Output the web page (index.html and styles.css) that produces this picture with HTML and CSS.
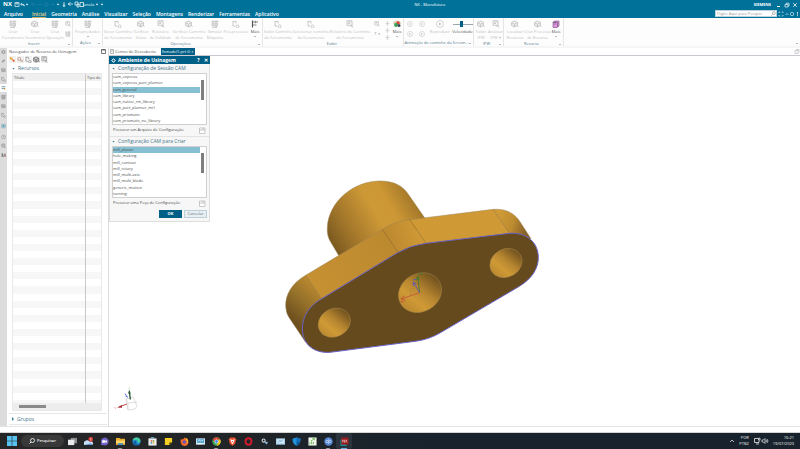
FILE: index.html
```html
<!DOCTYPE html>
<html lang="pt-BR">
<head>
<meta charset="utf-8">
<title>NX - Manufatura</title>
<link rel="stylesheet" href="styles.css">
</head>
<body>
<svg class="sprite" aria-hidden="true">
  <symbol id="i-tool" viewBox="0 0 8 8"><path d="M1 1h2v5H1zM4 1h3v1H4zM4 3h2v4H4zM6.500 3v3M1 7.500h5" fill="currentColor" fill-opacity=".5" stroke="currentColor" stroke-width=".7"/></symbol>
  <symbol id="i-cube" viewBox="0 0 8 8"><path d="M3.500 1l3 1.500v3l-3 1.500-3-1.500v-3zM.5 2.500l3 1.500 3-1.500M3.500 4v3M6 5l1.500 2" fill="currentColor" fill-opacity=".35" stroke="currentColor" stroke-width=".8"/></symbol>
  <symbol id="i-path" viewBox="0 0 8 8"><path d="M1 1v5h2M1 1.500h3v2M4 6.500a1.500 1.500 0 1 0 3 0 1.500 1.500 0 1 0-3 0" fill="none" stroke="currentColor" stroke-width=".9"/></symbol>
  <symbol id="i-report" viewBox="0 0 8 8"><path d="M1 .8h5v4.500H1zM2 2h3M2 3.500h2M5 5l2 2.500M6.500 5L4.500 7" fill="none" stroke="currentColor" stroke-width=".9"/></symbol>
  <symbol id="i-play" viewBox="0 0 8 8"><circle cx="4" cy="4" r="3.400" fill="none" stroke="currentColor" stroke-width=".7"/><path d="M3 2.500L5.500 4 3 5.500z" fill="currentColor"/></symbol>
  <symbol id="i-more" viewBox="0 0 8 8"><path d="M1.500.5v7" stroke="#555" stroke-width="1.200"/><path d="M2 2h5M2 5h3.500M4.500.8v2.400" stroke="#888" stroke-width="1.200"/></symbol>
  <symbol id="i-color" viewBox="0 0 8 8"><path d="M0 4a4 3.500 0 0 1 8 0z" fill="#d8d4b8"/><circle cx="5" cy="3" r="1.700" fill="#e03d2f"/><circle cx="3" cy="5" r="1.900" fill="#38a055"/><circle cx="6" cy="5.500" r="1.500" fill="#354858"/></symbol>
  <symbol id="i-lib" viewBox="0 0 8 8"><path d="M1 2l2-1h4v5L5 7.500H1z" fill="#df93e0" stroke="#84628a" stroke-width=".7"/><path d="M1 2.500h4.500V7M3 1v4" stroke="#66536f" stroke-width=".6" fill="none"/></symbol>
  <symbol id="i-move" viewBox="0 0 6 6"><path d="M3 .5v5M.5 3h5M2 1.500l1-1 1 1M2 4.500l1 1 1-1" fill="none" stroke="currentColor" stroke-width=".7"/></symbol>
  <symbol id="i-gear" viewBox="0 0 8 8"><circle cx="4" cy="4" r="2.200" fill="none" stroke="currentColor" stroke-width="1.400"/><path d="M4 .5v1M4 6.500v1M.5 4h1M6.500 4h1M1.500 1.500l.8.8M5.700 5.700l.8.8M6.500 1.500l-.8.8M2.300 5.700l-.8.8" stroke="currentColor"/></symbol>
  <symbol id="i-folder" viewBox="0 0 7 7"><path d="M.5 1h5.500v5.500H.5zM.5 3h3.500M4 1v2h2" fill="#fff" stroke="#b4b4b4" stroke-width=".7"/></symbol>
</svg>

<header class="head">
  <div class="titlebar">
    <strong class="brand">NX</strong>
    <svg class="quick" viewBox="0 0 92 9" aria-hidden="true"><path d="M1 2.500h4v4H1zM2 2.500v1.500h2V2.500" fill="none" stroke="#d9e8ef" stroke-width=".8"/><path d="M8 3L6.500 4.200l1.500 1.200M7 4.200H9q1.500 0 1.500 2M12 4h2l-1 1.200zM43 4h2l-1 1.200zM82 4h2l-1 1.200zM87 4h2l-1 1.200z" fill="#d9e8ef" stroke="#d9e8ef" stroke-width=".5"/><path d="M18 3.500h2v2h-2zM23 4.500h5M31 3h3v3h-3zM37 4.500h3" fill="none" stroke="#2580a3" stroke-width=".7"/><path d="M50 2v3M49 5h2l-1 2zM54 4h5M56.500 2.500L54 4l2.500 1.500" fill="none" stroke="#d9e8ef" stroke-width=".8"/><path d="M61 2h3v3h-3zM63 4h2v3h-2zM66 2.500h3.500v4H66z" fill="none" stroke="#e8f2f6" stroke-width=".8"/></svg>
    <span class="quick-text">Janela</span>
    <span class="wintitle">NX - Manufatura</span>
    <span class="vendor">SIEMENS</span>
    <button class="win" aria-label="Minimizar"><svg viewBox="0 0 6 6"><path d="M1 4.500h3" stroke="#fff"/></svg></button>
    <button class="win" aria-label="Restaurar"><svg viewBox="0 0 6 6"><path d="M1 2.500h3v2.500H1zM2.200 2.500V1.200H5V4H4" fill="none" stroke="#d9e8ef" stroke-width=".8"/></svg></button>
    <button class="win" aria-label="Fechar"><svg viewBox="0 0 6 6"><path d="M1.200 1.200l3.600 3.600M4.800 1.200L1.200 4.800" stroke="#d9e8ef" stroke-width=".9"/></svg></button>
  </div>
  <nav class="menu">
    <a class="file" href="#">Arquivo</a><a class="on" href="#">Inicial</a><a href="#">Geometria</a><a href="#">Análise</a><a href="#">Visualizar</a><a href="#">Seleção</a><a href="#">Montagens</a><a href="#">Renderizar</a><a href="#">Ferramentas</a><a href="#">Aplicativo</a>
    <label class="find"><input type="search" aria-label="Pesquisar comandos" placeholder="Digite Aqui para Pesquisar"><svg viewBox="0 0 6 6"><circle cx="3.500" cy="2.500" r="1.700" fill="none" stroke="#888" stroke-width=".7"/><path d="M2.300 3.700L.5 5.500" stroke="#888" stroke-width=".8"/></svg></label>
    <svg class="corner" viewBox="0 0 22 8" aria-hidden="true"><path d="M1 3V2h1.200M3.800 2H5v1M5 5v1H3.800M2.200 6H1V5M7.500 5l1.500-1.500L10.500 5" fill="none" stroke="#b9d9e5" stroke-width=".8"/><circle cx="14" cy="4" r="1.700" fill="none" stroke="#b9d9e5" stroke-width=".8"/><path d="M19.500 2v2.500M19.500 5.200v1" stroke="#d9e8ef" stroke-width=".9"/></svg>
  </nav>
</header>

<section class="ribbon" aria-label="Faixa de opções">
  <div class="group"><div class="tools g-insert">
    <button class="tool"><svg><use href="#i-tool"/></svg><span>Criar<br>Ferramenta</span></button>
    <button class="tool"><svg><use href="#i-cube"/></svg><span>Criar<br>Geometria</span></button>
    <button class="tool"><svg><use href="#i-tool"/></svg><span>Criar<br>Operação</span></button>
    <div class="minis"><svg><use href="#i-report"/></svg><svg><use href="#i-tool"/></svg></div>
  </div><div class="caption"><span>Inserir</span><i></i></div></div>
  <div class="group"><div class="tools g-act">
    <button class="tool"><svg><use href="#i-tool"/></svg><span>Propriedades</span><i></i></button>
  </div><div class="caption"><span>Ações</span><i></i></div></div>
  <div class="group"><div class="tools g-oper">
    <button class="tool"><svg><use href="#i-path"/></svg><span>Gerar Caminho<br>de Ferramenta</span></button>
    <button class="tool"><svg><use href="#i-cube"/></svg><span>Verificar<br>Goiva</span></button>
    <button class="tool"><svg><use href="#i-report"/></svg><span>Relatório<br>de Validade</span></button>
    <button class="tool"><svg><use href="#i-cube"/></svg><span>Verificar Caminho<br>de Ferramenta</span></button>
    <button class="tool"><svg><use href="#i-tool"/></svg><span>Simular<br>Máquina</span></button>
    <button class="tool"><svg><use href="#i-path"/></svg><span>Pós-processo</span></button>
    <button class="tool live"><svg><use href="#i-more"/></svg><span>Mais</span><i></i></button>
  </div><div class="caption"><span>Operações</span><i></i></div></div>
  <div class="group"><div class="tools g-show">
    <button class="tool"><svg><use href="#i-path"/></svg><span>Exibir Caminho<br>da Ferramenta</span></button>
    <button class="tool"><svg><use href="#i-path"/></svg><span>Selecionar caminho<br>da ferramenta</span></button>
    <button class="tool"><svg><use href="#i-report"/></svg><span>Relatório do Caminho<br>da Ferramenta</span></button>
    <div class="minis"><svg><use href="#i-report"/></svg><b>T ▾</b></div>
    <div class="minis tight"><svg><use href="#i-move"/></svg><svg><use href="#i-move"/></svg><svg><use href="#i-move"/></svg></div>
    <button class="tool live"><svg><use href="#i-color"/></svg><span>Mais</span><i></i></button>
  </div><div class="caption"><span>Exibir</span></div></div>
  <div class="group"><div class="tools g-anim">
    <div class="minis quad"><svg><use href="#i-play"/></svg><svg><use href="#i-play"/></svg><svg><use href="#i-play"/></svg><svg><use href="#i-play"/></svg></div>
    <button class="tool"><svg><use href="#i-play"/></svg><span>Reproduzir</span></button>
    <label class="tool live"><input type="range" min="1" max="10" value="5"><span>Velocidade</span></label>
  </div><div class="caption"><span>Animação do caminho da ferram...</span><i></i></div></div>
  <div class="group"><div class="tools g-ipw">
    <button class="tool"><svg><use href="#i-cube"/></svg><span>Exibir<br>IPW</span></button>
    <button class="tool"><svg><use href="#i-report"/></svg><span>Analisar<br>IPW ▾</span></button>
  </div><div class="caption"><span>IPW</span><i></i></div></div>
  <div class="group"><div class="tools g-res">
    <button class="tool"><svg><use href="#i-cube"/></svg><span>Localizar<br>Recursos</span></button>
    <button class="tool"><svg><use href="#i-cube"/></svg><span>Criar Processo<br>de Recurso</span></button>
    <button class="tool live"><svg><use href="#i-lib"/></svg><span>Mais</span><i></i></button>
  </div><div class="caption"><span>Recurso</span><i></i></div></div>
  <span class="more-groups"></span>
</section>

<main class="work">
  <aside class="rail" aria-label="Barra de recursos">
    <svg><use href="#i-gear"/></svg>
    <svg viewBox="0 0 8 8"><path d="M2 7V3l4-2v3z" fill="#999"/></svg>
    <svg><use href="#i-cube"/></svg>
    <svg><use href="#i-path"/></svg>
    <svg class="on" viewBox="0 0 8 8"><path d="M1 2h6M1 5h5" stroke="#5f8da2" stroke-width="1.400"/><path d="M4 4h3l-1 3z" fill="#e88a35"/></svg>
    <svg><use href="#i-tool"/></svg>
    <svg><use href="#i-cube"/></svg>
    <svg><use href="#i-path"/></svg>
    <svg class="gap" viewBox="0 0 8 8"><path d="M1 1h6v6H1z" fill="#b9d6de" stroke="#809ba5" stroke-width=".7"/><circle cx="4" cy="4" r="1.700" fill="#4d9aaf"/></svg>
    <svg class="gap" viewBox="0 0 8 8"><circle cx="4" cy="4" r="3" fill="none" stroke="#888" stroke-width=".8"/><path d="M4 2v2h1.500" fill="none" stroke="#888" stroke-width=".8"/></svg>
    <svg><use href="#i-report"/></svg>
    <svg viewBox="0 0 8 8"><path d="M1 1h2v6H1zM4 3h1.500v4H4z" fill="#777"/><path d="M5 2h2.500v5H6z" fill="#9b7772"/></svg>
  </aside>

  <aside class="nav-panel">
    <h2>Navegador de Recurso de Usinagem<svg viewBox="0 0 5 5"><path d="M.5.500h4v4h-4zM.5 1h4" fill="none" stroke="#555" stroke-width=".8"/></svg></h2>
    <div class="nav-tools">
      <svg viewBox="0 0 8 8"><path d="M1 1l3 1v2L1 4z" fill="#edab36"/><path d="M3 3l4 2-2 2z" fill="#e06b35"/></svg>
      <svg viewBox="0 0 8 8"><path d="M1 2h3v3H1zM4 4l3 3M4 7l3-3" fill="none" stroke="#c09a8c" stroke-width=".9"/></svg>
      <svg><use href="#i-path"/></svg>
      <svg class="dark"><use href="#i-cube"/></svg>
      <svg><use href="#i-report"/></svg>
    </div>
    <h3 class="fold open">Recursos</h3>
    <div class="grid-box">
      <table>
        <thead><tr><th>Título</th><th class="kind">Tipo de</th></tr></thead>
        <tbody><tr><td></td><td></td></tr></tbody>
      </table>
      <div class="hscroll"><span></span></div>
    </div>
    <h3 class="fold closed">Grupos</h3>
  </aside>

  <section class="stage">
    <div class="tabs">
      <a class="tab" href="#"><svg viewBox="0 0 4 5"><path d="M.5.500h3v4h-3zM1 2h2" fill="none" stroke="#888" stroke-width=".6"/></svg>Centro de Descoberta</a>
      <a class="tab on" href="#">fxmodel1.prt ⊙ ×</a>
      <svg class="pin" viewBox="0 0 6 6"><path d="M1 2h3v3H1zM2 1h3v3" fill="none" stroke="#bbb" stroke-width=".7"/></svg>
    </div>
    <div class="canvas">
      <svg class="scene" viewBox="109 56 691 370" role="img" aria-label="Flange com cubo cilíndrico e três furos">
        <defs>
          <linearGradient id="hub" gradientUnits="userSpaceOnUse" x1="170" y1="245" x2="425" y2="95"><stop offset="0" stop-color="#73541d"/><stop offset=".25" stop-color="#a0752a"/><stop offset=".58" stop-color="#cd9836"/><stop offset=".75" stop-color="#cc9734"/><stop offset="1" stop-color="#a1762a"/></linearGradient>
          <linearGradient id="endL" gradientUnits="userSpaceOnUse" x1="45" y1="440" x2="125" y2="350"><stop offset="0" stop-color="#6e501e"/><stop offset=".5" stop-color="#94702a"/><stop offset="1" stop-color="#b9882f"/></linearGradient>
          <linearGradient id="flat" gradientUnits="userSpaceOnUse" x1="95" y1="350" x2="350" y2="200"><stop offset="0" stop-color="#c69132"/><stop offset="1" stop-color="#bc892f"/></linearGradient>
          <linearGradient id="mid" gradientUnits="userSpaceOnUse" x1="340" y1="215" x2="430" y2="185"><stop offset="0" stop-color="#bd8930"/><stop offset="1" stop-color="#ce9835"/></linearGradient>
          <linearGradient id="endR" gradientUnits="userSpaceOnUse" x1="670" y1="150" x2="755" y2="175"><stop offset="0" stop-color="#cf9a36"/><stop offset=".5" stop-color="#bd8b30"/><stop offset="1" stop-color="#85622a"/></linearGradient>
          <linearGradient id="bore" x1="0" y1=".65" x2="1" y2=".3"><stop offset="0" stop-color="#ba882f"/><stop offset=".3" stop-color="#cf9a36"/><stop offset=".55" stop-color="#b78630"/><stop offset="1" stop-color="#694c1c"/></linearGradient>
        </defs>
        <g transform="translate(275 170) scale(.33333)">
          <path d="M192 258L167 216Q155 198 157 172C161 94 236 33 315 33C358 33 385 48 402 76L450 145L400 210Z" fill="url(#hub)" stroke="#9b8457" stroke-width="1.500"/>
          <path d="M140 386L92 316C50 340 31 375 32 408Q33 430 43 444L92 517Z" fill="url(#endL)"/>
          <path d="M92 316L322 178L372 250L140 387Z" fill="url(#flat)"/>
          <path d="M322 178Q360 153 404 149L454 222Q408 228 370 250Z" fill="url(#mid)"/>
          <path d="M404 149L655 118L703 191L453 222Z" fill="#cf9935"/>
          <path d="M655 118C692 116 716 128 733 152L768 206L740 210L703 191Z" fill="url(#endR)"/>
          <path d="M92 517L43 444Q33 430 32 408C31 375 50 340 92 316L322 178Q360 153 404 149L655 118C692 116 716 128 733 152L768 206" fill="none" stroke="#9b8457" stroke-width="1.500"/>
          <path d="M92 316l48 70M322 178l48 70M404 149l49 71M655 118l48 72" stroke="#825f27" stroke-width="1.500"/>
          <path d="M140 386L368 248Q408 225 453 220L703 190C755 186 790 218 790 262C790 295 772 325 733 349L493 490Q460 509 420 514L165 547C115 550 82 522 82 475C82 438 105 406 140 386Z" fill="#644a1d" stroke="#6861c8" stroke-width="3"/>
          <g fill="url(#bore)" stroke="#a7874b" stroke-width="1.500">
            <ellipse cx="178" cy="458" rx="50" ry="42" transform="rotate(-28 178 458)"/>
            <ellipse cx="693" cy="279" rx="50" ry="42" transform="rotate(-28 693 279)"/>
            <ellipse cx="435" cy="368" rx="67" ry="57" transform="rotate(-30 435 368)"/>
          </g>
          <g fill="none" stroke-width="2.500">
            <path d="M434 368L378 387M388 378l-10 9 13 4M377 395h10" stroke="#c85238"/>
            <path d="M434 368L428 320M424 331l4-12 5 12M430 312h12" stroke="#367b32"/>
            <path d="M434 368L415 337M415 348v-12l10 7M414 330l10-2" stroke="#5753bc"/>
            <path d="M408 377l-3-17 14-8" stroke="#a8793d" stroke-width="1.500"/>
          </g>
        </g>
        <g fill="none">
          <path d="M126 399l7-2 4 9-2 3-7 1zM126 399l2 4 9-1M128 403v7" stroke="#c9c9c9" stroke-width=".6"/>
          <path d="M127 404l-8 3" stroke="#c34b4b"/><path d="M122 405l-5 2.500 5 .3z" fill="#a92d36"/><path d="M114.500 407.500l1.500 1" stroke="#e26868" stroke-width=".7"/>
          <path d="M130.300 399.500l-.8-7" stroke="#315b3b" stroke-width="1.400"/><path d="M128 393.500l1.300-4 1.400 4z" fill="#315b3b"/><path d="M128.500 388.500l1-.6" stroke="#80b080" stroke-width=".7"/>
          <path d="M125 393.500l2.500 4M125.500 396l2 1" stroke="#6266dc" stroke-width=".9"/>
        </g>
      </svg>

      <form class="dialog" role="dialog" aria-label="Ambiente de Usinagem">
        <header class="dlg-title"><svg><use href="#i-gear"/></svg><strong>Ambiente de Usinagem</strong><button type="button">?</button><button type="button">✕</button></header>
        <h3 class="fold open">Configuração de Sessão CAM</h3>
        <div class="list"><ul role="listbox" aria-label="Configuração de Sessão CAM">
          <li role="option">cam_express</li><li role="option">cam_express_part_planner</li><li role="option" class="sel" aria-selected="true">cam_general</li><li role="option">cam_library</li><li role="option">cam_native_rm_library</li><li role="option">cam_part_planner_mrl</li><li role="option">cam_prismatic</li><li role="option">cam_prismatic_no_library</li>
        </ul><span class="bar"></span></div>
        <div class="browse"><span>Procurar um Arquivo de Configuração</span><button type="button" aria-label="Procurar arquivo"><svg><use href="#i-folder"/></svg></button></div>
        <h3 class="fold open second">Configuração CAM para Criar</h3>
        <div class="list"><ul role="listbox" aria-label="Configuração CAM para Criar">
          <li role="option" class="sel" aria-selected="true">mill_planar</li><li role="option">hole_making</li><li role="option">mill_contour</li><li role="option">mill_rotary</li><li role="option">mill_multi-axis</li><li role="option">mill_multi_blade</li><li role="option">generic_motion</li><li role="option">turning</li>
        </ul><span class="bar"></span></div>
        <div class="browse"><span>Procurar uma Peça de Configuração</span><button type="button" aria-label="Procurar peça"><svg><use href="#i-folder"/></svg></button></div>
        <footer><button class="ok" type="button">OK</button><button class="cancel" type="button">Cancelar</button></footer>
      </form>
    </div>
  </section>
</main>
<div class="status"></div>

<footer class="taskbar">
  <button class="start" aria-label="Iniciar"><svg viewBox="0 0 10 10"><path d="M0 0h4.700v4.700H0zM5.300 0H10v4.700H5.300zM0 5.300h4.700V10H0zM5.300 5.300H10V10H5.300z" fill="#58c4f2"/></svg></button>
  <button class="search"><svg viewBox="0 0 6 6"><circle cx="3.500" cy="2.500" r="2" fill="none" stroke="#fff" stroke-width=".8"/><path d="M2 4L.5 5.500" stroke="#fff" stroke-width=".9"/></svg>Pesquisar</button>
  <div class="apps">
    <button aria-label="Visão de tarefas"><svg viewBox="0 0 10 10"><path d="M3 1h7v6H3z" fill="#8a8d90"/><path d="M0 3h7v6H0z" fill="#e9e9e9"/></svg></button>
    <button aria-label="Clima"><svg viewBox="0 0 10 10"><path d="M0 9a2 2 0 0 1 1-4 3 3 0 0 1 5 0 2 2 0 0 1 3 4z" fill="#c9def5"/><path d="M0 9h9L8 7z" fill="#5e96d9"/><circle cx="7.500" cy="2.500" r="2.700" fill="#c8372f"/><path d="M7.500 1v3" stroke="#fff" stroke-width=".7"/></svg></button>
    <button aria-label="Chat"><svg viewBox="0 0 10 10"><path d="M1 9l.5-2A4.300 4.300 0 1 1 5 9.300z" fill="#7562c8"/><path d="M2.500 3.500h3.500v3H2.500zM6.200 4.500l1.500-1v3l-1.500-1z" fill="#fff"/></svg></button>
    <button class="run" aria-label="Explorador"><svg viewBox="0 0 10 10"><path d="M0 1h4l1 1h5v7H0z" fill="#e8ad2e"/><path d="M0 4h10v3H0z" fill="#ffd76a"/><path d="M2 7h6v2H2z" fill="#3b8fc8"/></svg></button>
    <button aria-label="Edge"><svg viewBox="0 0 10 10"><circle cx="5" cy="5" r="4.500" fill="#1c83ca"/><path d="M.7 4A4.500 4.500 0 0 1 9.500 4.500Q9 7 6 6.500 7 4 5 3.500 2.500 3 .7 4z" fill="#46cba1"/><path d="M4.500 4.500Q3 8 7 8.500 3 10 1.500 7 2 4 4.500 4.500z" fill="#145b9e"/></svg></button>
    <button aria-label="Loja"><svg viewBox="0 0 10 10"><path d="M.5 1.500h9V9.500h-9z" fill="#eee"/><path d="M3.500 2V.500h3V2" fill="none" stroke="#6eb3dc"/><path d="M3 3.500h1.700v1.700H3z" fill="#e7583e"/><path d="M5.300 3.500H7v1.700H5.300z" fill="#77ad34"/><path d="M3 5.800h1.700v1.700H3z" fill="#2c91d0"/><path d="M5.300 5.800H7v1.700H5.300z" fill="#efb52f"/></svg></button>
    <button aria-label="Notas"><svg viewBox="0 0 10 10"><path d="M1 1h8v5L6 9H1z" fill="#f7ce23"/><path d="M6 9V6h3z" fill="#383318"/></svg></button>
    <button aria-label="Firefox"><svg viewBox="0 0 10 10"><path d="M1 2l1 1 2-1 1-1.500Q6.500 2 7 2l1-.5Q10 5 9 7.500A4.300 4.300 0 0 1 1 7Q.3 4 1 2z" fill="#f36b28"/><path d="M5 .5Q7 2 7 3.500q2 2 0 4Q9 7 9 4 8 1 5 .5z" fill="#ffc52e"/><circle cx="4.800" cy="5.500" r="2" fill="#7351bd"/></svg></button>
    <button aria-label="Painel"><svg viewBox="0 0 10 10"><path d="M0 1.500h10v7H0z" fill="#d1e9f4"/><path d="M1 2.500h8v4H1z" fill="#4ba0d0"/><path d="M2 5l2-2 1 2M6 4h2M2 7.500h5" stroke="#fff" stroke-width=".8" fill="none"/></svg></button>
    <button class="run" aria-label="Chrome"><svg viewBox="0 0 10 10"><circle cx="5" cy="5" r="4.700" fill="#3aa757"/><path d="M1 2.500A4.700 4.700 0 0 1 9.200 3H5L3.200 6z" fill="#e34133"/><path d="M9.200 3A4.700 4.700 0 0 1 5 9.700L7 6V3z" fill="#fbc516"/><circle cx="5" cy="5" r="2.200" fill="#fff"/><circle cx="5" cy="5" r="1.600" fill="#4285f4"/></svg></button>
    <button aria-label="Brave"><svg viewBox="0 0 10 10"><path d="M2.500.5h5L9 2.500 8 7.500l-3 2.200-3-2.200L1 2.500z" fill="#ef5130"/><path d="M2.500 2.500L5 3.200l2.500-.7-1 3L5 8 3.500 5.500z" fill="#fff"/><path d="M4 4.500h2L5 6z" fill="#ef5130"/></svg></button>
    <button aria-label="Opera"><svg viewBox="0 0 10 10"><ellipse cx="5" cy="5" rx="3.300" ry="3.600" fill="none" stroke="#d51a2c" stroke-width="2"/></svg></button>
    <button aria-label="Utilitário"><svg viewBox="0 0 10 10"><circle cx="4" cy="4" r="1.700" fill="none" stroke="#d3d9df" stroke-width="1.200"/><path d="M5 5l2.800 3M7 5.500l1.500 1" stroke="#8fb6d8" stroke-width="1.300"/></svg></button>
    <button aria-label="Monitor"><svg viewBox="0 0 10 10"><path d="M0 1.500h10v7H0z" fill="#a8d0ea"/><path d="M1 2.500h8v4.500H1z" fill="#cfe7f6"/><path d="M2 6l2-2 1.500 1 2-2" fill="none" stroke="#4b8fc0" stroke-width=".8"/></svg></button>
    <button aria-label="Segurança"><svg viewBox="0 0 10 10"><path d="M5 .5l4.500 1.500Q9.500 8 5 9.700.5 8 .5 2z" fill="#2292dd"/><path d="M5 .5l4.500 1.500L9 5H5z" fill="#166eb8"/><path d="M5 5h4Q8 8.500 5 9.700z" fill="#0d5797"/></svg></button>
    <button aria-label="Planilha"><svg viewBox="0 0 10 10"><path d="M.5.5h9v9h-9z" fill="#f1f6ed"/><path d="M2 8V6M4 8V5M6 8V5.500M3 4.500l2-1 2-2M5 1.500h2v2" fill="none" stroke="#65b64b"/></svg></button>
    <button class="run" aria-label="Aplicativo qb"><svg viewBox="0 0 10 10"><circle cx="5" cy="5" r="4.700" fill="#5484cf"/><circle cx="3.500" cy="5" r="1.300" fill="none" stroke="#cfe1fa" stroke-width=".8"/><circle cx="6.500" cy="5" r="1.300" fill="none" stroke="#cfe1fa" stroke-width=".8"/><path d="M5 5v3M5.200 2v3" stroke="#cfe1fa" stroke-width=".6"/></svg></button>
    <button class="run current" aria-label="NX"><svg viewBox="0 0 10 10"><path d="M.5 3h7v7h-7z" fill="#168d92"/><path d="M1.500.5h8v8h-8z" fill="#951d20"/><path d="M3 6V3l2 3V3M6 3l2 3M8 3L6 6" stroke="#f0c8c4" stroke-width=".7" fill="none"/></svg></button>
  </div>
  <div class="tray">
    <svg viewBox="0 0 6 6"><path d="M1 4l2-2 2 2" fill="none" stroke="#ddd" stroke-width=".8"/></svg>
    <span>POR<br>PTB2</span>
    <svg class="net" viewBox="0 0 16 8"><path d="M5 1.500H1.500v4H6V4M3 7h3M5.500 1.200h1.500v2H5.500z" fill="none" stroke="#eee" stroke-width=".8"/><path d="M9 3h1.500L12 1.500v5L10.500 5H9zM13 3q1 1 0 2M14 2q2 2 0 4" fill="none" stroke="#eee" stroke-width=".7"/></svg>
    <time>16:21<br>19/07/2023</time>
  </div>
</footer>
</body>
</html>
```

FILE: styles.css
```css
* { box-sizing: border-box; }
html, body { height: 100%; }
body {
  margin: 0;
  display: flex;
  flex-direction: column;
  overflow: hidden;
  font-family: "Open Sans", "Noto Sans", sans-serif;
  font-size: 4px;
  line-height: 6px;
  color: #4c4c4c;
  background: #fff;
}
button, input { font: inherit; color: inherit; border: 0; margin: 0; padding: 0; background: none; }
a { color: inherit; text-decoration: none; }
h2, h3, ul { margin: 0; padding: 0; font-weight: 400; }
ul { list-style: none; }
svg { display: block; flex: none; }
.sprite { width: 0; height: 0; position: absolute; }

/* Title bar and menu */
.head { background: #00729a; color: #fff; flex: none; }
.titlebar { display: flex; align-items: center; height: 9px; padding: 0 1px 0 3px; position: relative; }
.brand { font-size: 6px; line-height: 9px; }
.quick { width: 92px; height: 9px; margin-left: 2px; }
.quick-text { position: absolute; left: 83px; color: #fff; }
.wintitle { margin: 0 auto; }
.vendor { font-weight: 700; margin-right: 4px; }
.win { width: 8px; height: 8px; }
.win svg { width: 6px; height: 6px; margin: 1px; }
.menu { display: flex; align-items: center; gap: 5px; height: 9px; padding-left: 4px; font-size: 5px; line-height: 8px; font-weight: 600; }
.menu .file { margin-right: 4px; }
.menu .on { color: #f3d488; box-shadow: inset 0 -1px #c9b16f; }
.find { display: flex; align-items: center; height: 7px; width: 62px; margin-left: auto; background: #fff; border: 1px solid #b9d2dc; }
.find input { flex: 1; min-width: 0; font-size: 4px; line-height: 5px; font-weight: 400; color: #555; padding-left: 1px; outline: 0; }
.find input::placeholder { color: #999; }
.find svg { width: 5px; height: 5px; }
.corner { width: 22px; height: 8px; margin-left: -4px; }

/* Ribbon */
.ribbon { display: flex; flex: none; height: 30px; background: #fdfdfd; border-bottom: 2px solid #f6f6f6; }
.group { display: flex; flex-direction: column; border-right: 1px solid #e6e6e6; }
.tools { display: grid; flex: 1; }
.g-insert { grid-template-columns: 22px 22px 18px 8px; padding-left: 2px; }
.g-act { grid-template-columns: 29px; }
.g-oper { grid-template-columns: 30px 16px 23px 34px 18px 24px 14px; }
.g-show { grid-template-columns: 30px 36px 42px 12px 8px 12px; }
.g-anim { grid-template-columns: 24px 24px 21px; }
.g-ipw { grid-template-columns: 14px 15px; }
.g-res { grid-template-columns: 22px 23px 14px; }
.tool { display: flex; flex-direction: column; align-items: center; justify-content: flex-start; padding-top: 2px; white-space: nowrap; text-align: center; color: #c2c2c2; min-width: 0; }
.tool span { margin-top: 1px; }
.tool svg { width: 8px; height: 8px; }
.tool.live { color: #555; }
.tool i, .caption i, .more-groups { width: 0; height: 0; border: 1px solid transparent; border-top-color: #777; border-bottom: 0; }
.tool i { margin-top: 1px; }
.tool input { appearance: none; width: 20px; height: 8px; background: linear-gradient(#9aa7ae, #9aa7ae) center / 100% 1px no-repeat; }
.tool input::-webkit-slider-thumb { appearance: none; width: 3px; height: 6px; background: #005f87; }
.minis { display: flex; flex-direction: column; align-items: center; gap: 4px; padding-top: 3px; color: #c2c2c2; white-space: nowrap; }
.minis svg { width: 6px; height: 6px; }
.minis.tight { gap: 2px; }
.minis.tight svg { width: 5px; height: 5px; }
.minis.quad { display: grid; grid-template-columns: 6px 6px; column-gap: 6px; justify-content: center; align-content: start; }
.caption { display: flex; align-items: center; height: 6px; color: #557a8d; padding-right: 2px; white-space: nowrap; }
.caption span { flex: 1; width: 0; text-align: center; }
.more-groups { margin: auto 2px 2px auto; }

/* Work area */
.work { display: flex; flex: 1; min-height: 0; border-bottom: 1px solid #e4e4e4; }
.rail { display: flex; flex-direction: column; gap: 1px; width: 7px; background: #dcdcdc; color: #8c8c8c; }
.rail svg { width: 7px; height: 8px; padding: 1px; }
.rail .on { background: #fff; }
.rail .gap { margin-top: 2px; }
.nav-panel { display: flex; flex-direction: column; width: 102px; padding: 0 1px 0 2px; border-right: 1px solid #dcdcdc; }
.nav-panel h2 { display: flex; justify-content: space-between; align-items: center; font-size: 4px; line-height: 7px; padding-right: 1px; }
.nav-panel h2 svg { width: 5px; height: 5px; }
.nav-tools { display: flex; gap: 1px; height: 9px; padding-top: 1px; }
.nav-tools svg { width: 7px; height: 7px; background: #f1f1f1; color: #999; }
.nav-tools .dark { color: #666; }
.fold { display: flex; align-items: center; gap: 3px; font-size: 5px; line-height: 9px; padding-left: 3px; color: #47758a; }
.fold::before { content: ""; width: 3px; height: 2px; background: #397c9c; clip-path: polygon(0 0, 100% 0, 50% 100%); }
.fold.closed { border-top: 1px solid #e6e6e6; border-bottom: 1px solid #e6e6e6; margin: 2px 0 1px; line-height: 10px; }
.fold.closed::before { width: 2px; height: 4px; clip-path: polygon(0 0, 100% 50%, 0 100%); }
.grid-box { display: flex; flex-direction: column; flex: 1; margin: 0 5px 0 3px; border: 1px solid #e9e9e9; }
table { flex: 1; width: 100%; border-collapse: collapse; display: flex; flex-direction: column; }
thead, tr { display: flex; }
tbody { display: flex; flex: 1; background: repeating-linear-gradient(#fff 0 2.2%, #f7f7f7 2.2% 4.4%); }
tbody tr, thead tr { flex: 1; }
th { flex: 1; text-align: left; font-weight: 400; line-height: 7px; padding: 0 1px; background: #efefef; white-space: nowrap; overflow: hidden; }
th.kind, td + td { flex: 0 0 16px; border-left: 1px solid #c9c9c9; }
td { flex: 1; padding: 0; }
.hscroll { height: 7px; padding: 2px 6px; background: #ededed; }
.hscroll span { display: block; width: 27px; height: 3px; background: #8a8a8a; }

.stage { display: flex; flex-direction: column; flex: 1; min-width: 0; }
.tabs { display: flex; height: 8px; border-bottom: 1px solid #c9c9d2; line-height: 7px; }
.tab { display: flex; align-items: center; gap: 1px; padding-left: 1px; white-space: nowrap; width: 52px; }
.tab svg { width: 4px; height: 5px; }
.tab.on { width: 34px; background: #005f87; color: #fff; }
.pin { width: 6px; height: 7px; margin-left: auto; }
.canvas { position: relative; flex: 1; min-height: 0; }
.scene { width: 100%; height: 100%; }

/* Floating dialog over the canvas */
.dialog { position: absolute; left: 0; top: 0; width: 101px; background: #f7f7f7; border: 1px solid #dedede; border-top: 0; }
.dlg-title { display: flex; align-items: center; height: 8px; padding: 0 2px; gap: 2px; margin: 0 -1px; background: #005f87; color: #fff; font-size: 5px; line-height: 8px; }
.dlg-title svg { width: 5px; height: 5px; }
.dlg-title strong { flex: 1; white-space: nowrap; }
.dlg-title button { width: 5px; font-weight: 700; line-height: 8px; }
.dialog .fold { padding-left: 2px; }
.dialog .second { border-top: 1px solid #e3e3e3; margin-top: 1px; }
.list { display: flex; height: 52px; margin: 0 2px; border: 1px solid #d0d0d0; background: #fff; }
.list ul { flex: 1; display: flex; flex-direction: column; }
.list li { flex: 1; display: flex; align-items: center; line-height: 6px; }
.list .sel { background: #86c0d2; }
.list .bar { width: 3px; height: 20px; margin: 6px 2px 0 1px; background: #7e7e7e; }
.browse { display: flex; align-items: center; justify-content: space-between; height: 10px; padding: 0 3px; white-space: nowrap; }
.browse svg { width: 7px; height: 7px; }
.dialog footer { display: flex; justify-content: flex-end; gap: 2px; padding: 2px 2px 3px; }
.dialog footer button { width: 23px; height: 8px; line-height: 6px; border: 1px solid #bcd0da; background: #e9eef1; color: #5c7685; }
.dialog footer .ok { background: #005f87; border-color: #005f87; color: #fff; font-weight: 700; }

.status { flex: none; height: 6px; border-bottom: 1px solid #d5d5d5; background: #fff; }

/* Taskbar */
.taskbar { display: flex; align-items: center; flex: none; height: 16px; padding: 0 6px 0 7px; color: #f2f2f2; background: linear-gradient(90deg, #262626, #202427 30%, #17222d 55%); }
.start svg { width: 10px; height: 10px; }
.search { display: flex; align-items: center; justify-content: center; gap: 2px; width: 43px; height: 12px; margin: 0 0 0 4px; border-radius: 6px; background: #393939; font-weight: 600; }
.search svg { width: 6px; height: 6px; }
.apps { display: flex; }
.apps button { display: flex; align-items: center; justify-content: center; width: 16px; height: 16px; position: relative; }
.apps svg { width: 9px; height: 9px; }
.run::after { content: ""; position: absolute; bottom: 0; left: 6px; width: 4px; height: 1px; background: #8f9499; }
.apps .current { background: #2b343d; border-radius: 2px; }
.current::after { background: #55b2dd; left: 5px; width: 6px; }
.tray { display: flex; align-items: center; gap: 4px; margin-left: auto; text-align: right; }
.tray svg { width: 6px; height: 6px; }
.tray .net { width: 16px; height: 8px; }
```
